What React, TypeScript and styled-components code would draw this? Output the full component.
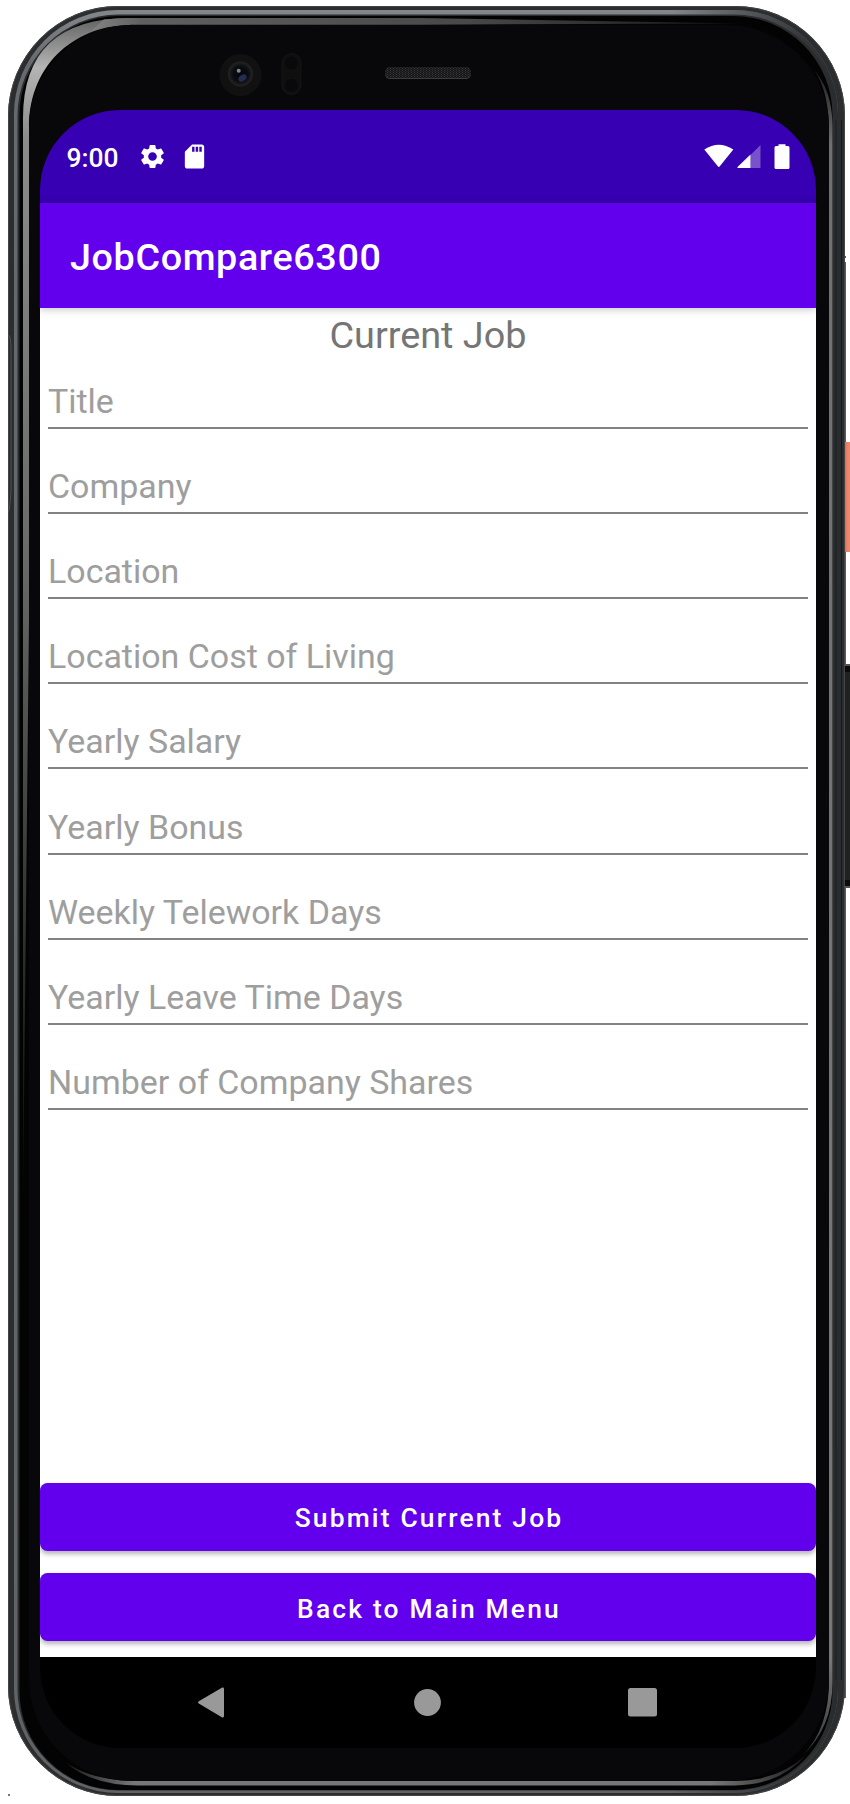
import React from "react";
import styled, { createGlobalStyle } from "styled-components";
import { MdSdCard, MdSettings } from "react-icons/md";

const PURPLE = "#6200ee";
const PURPLE_DARK = "#3700b3";

const GlobalStyle = createGlobalStyle`
  *, *::before, *::after { box-sizing: border-box; }
  body { margin: 0; background: #fff; font-family: Roboto, "Liberation Sans", sans-serif; }
`;

const Device = styled.main`
  position: relative;
  width: 850px;
  height: 1804px;
  padding: 110px 34px 56px 40px;
  overflow: hidden;
`;

const FrameArt = styled.svg`
  position: absolute;
  inset: 0;
`;

const Screen = styled.div`
  position: relative;
  width: 776px;
  height: 1638px;
  display: flex;
  flex-direction: column;
  border-radius: 80px;
  overflow: hidden;
`;

const StatusBar = styled.header`
  flex: none;
  height: 93px;
  display: flex;
  align-items: center;
  justify-content: space-between;
  padding: 0 26.5px;
  background: ${PURPLE_DARK};
  color: #fff;
`;

const StatusGroup = styled.div<{ $gap: number }>`
  display: flex;
  align-items: center;
  gap: ${({ $gap }) => $gap}px;
`;

const Clock = styled.span`
  margin-right: 6.5px;
  font-size: 26.4px;
  font-weight: 500;
  line-height: 32px;
  padding-top: 2px;
`;

const AppBar = styled.div`
  flex: none;
  position: relative;
  height: 105px;
  display: flex;
  align-items: center;
  padding: 3px 30px 0;
  background: ${PURPLE};
  box-shadow: 0 1px 8px rgba(0, 0, 0, 0.25);
`;

const AppTitle = styled.h1`
  margin: 0;
  color: #fff;
  font-size: 37.7px;
  font-weight: 500;
  line-height: 44px;
  letter-spacing: 0.63px;
`;

const Content = styled.section`
  flex: 1;
  min-height: 0;
  display: flex;
  flex-direction: column;
  background: #fff;
`;

const FormTitle = styled.h2`
  margin: 0;
  height: 36px;
  padding-top: 5px;
  color: #757575;
  font-size: 37.8px;
  font-weight: 400;
  line-height: 44px;
  text-align: center;
`;

const Fields = styled.div`
  display: flex;
  flex-direction: column;
  padding: 0 8px;
`;

const Field = styled.label`
  height: 85.1px;
  display: flex;
  flex-direction: column;
  justify-content: flex-end;
  padding: 0 0 5px;
  border-bottom: 2px solid #828282;
  color: #9e9e9e;
  font-size: 33.95px;
  line-height: 40px;
`;

const Actions = styled.div`
  margin-top: auto;
  display: flex;
  flex-direction: column;
  gap: 22.5px;
  padding-bottom: 16px;
`;

const ActionButton = styled.button`
  height: 68px;
  padding: 3px 0 0 2px;
  border: 0;
  border-radius: 7.5px;
  background: ${PURPLE};
  box-shadow: 0 3px 5px rgba(0, 0, 0, 0.3);
  color: #fff;
  font: 500 26.4px Roboto, "Liberation Sans", sans-serif;
  letter-spacing: 2.17px;
`;

const NavBar = styled.nav`
  flex: none;
  height: 91px;
  display: flex;
  align-items: center;
  justify-content: space-between;
  padding: 0 159px 0 158px;
  border-radius: 0 0 80px 80px;
  background: #000;
`;

const HomeIcon = styled.svg`
  margin-left: 2px;
`;

const fields = [
  "Title",
  "Company",
  "Location",
  "Location Cost of Living",
  "Yearly Salary",
  "Yearly Bonus",
  "Weekly Telework Days",
  "Yearly Leave Time Days",
  "Number of Company Shares",
];

function PhoneFrame() {
  return (
    <FrameArt width="850" height="1804" viewBox="0 0 850 1804" aria-hidden="true">
      <defs>
        <linearGradient id="rim" x1="0" y1="0" x2="0" y2="1">
          <stop offset="0" stopColor="#85868b" />
          <stop offset=".03" stopColor="#66696e" />
          <stop offset=".3" stopColor="#64686c" />
          <stop offset="1" stopColor="#606264" />
        </linearGradient>
        <linearGradient id="rimFade" x1="0" y1="0" x2="1" y2="0">
          <stop offset="0" stopColor="#151617" stopOpacity="0" />
          <stop offset=".8" stopColor="#151617" stopOpacity="0" />
          <stop offset="1" stopColor="#292c2e" />
        </linearGradient>
        <linearGradient id="glassLeft" x1="0" y1="20" x2="0" y2="1200" gradientUnits="userSpaceOnUse">
          <stop offset="0" stopColor="#666" />
          <stop offset=".04" stopColor="#b4b4b4" />
          <stop offset=".1" stopColor="#8b8b8b" />
          <stop offset=".45" stopColor="#6a6a6a" />
          <stop offset=".75" stopColor="#353535" />
          <stop offset="1" stopColor="#0a090b" />
        </linearGradient>
        <linearGradient id="glassTop" x1="60" y1="0" x2="740" y2="0" gradientUnits="userSpaceOnUse">
          <stop offset="0" stopColor="#999" />
          <stop offset=".12" stopColor="#606060" />
          <stop offset=".6" stopColor="#484848" />
          <stop offset="1" stopColor="#151515" />
        </linearGradient>
        <linearGradient id="glassRight" x1="0" y1="60" x2="0" y2="1760" gradientUnits="userSpaceOnUse">
          <stop offset="0" stopColor="#111" />
          <stop offset=".05" stopColor="#707070" />
          <stop offset=".94" stopColor="#777" />
          <stop offset="1" stopColor="#333" />
        </linearGradient>
        <linearGradient id="glassBottom" x1="60" y1="0" x2="800" y2="0" gradientUnits="userSpaceOnUse">
          <stop offset="0" stopColor="#111" />
          <stop offset=".1" stopColor="#777" />
          <stop offset=".88" stopColor="#777" />
          <stop offset="1" stopColor="#222" />
        </linearGradient>
        <linearGradient id="power" x1="844" y1="0" x2="850" y2="0" gradientUnits="userSpaceOnUse">
          <stop offset="0" stopColor="#d9583f" />
          <stop offset=".5" stopColor="#f08068" />
          <stop offset="1" stopColor="#ec8a72" />
        </linearGradient>
        <radialGradient id="lens">
          <stop offset="0" stopColor="#05060a" />
          <stop offset=".6" stopColor="#0b0c10" />
          <stop offset="1" stopColor="#252525" />
        </radialGradient>
        <pattern id="mesh" width="3" height="2" patternUnits="userSpaceOnUse">
          <rect width="3" height="2" fill="#151515" />
          <rect width="1" height="1" fill="#3a3a3a" />
          <rect x="1.5" y="1" width="1" height="1" fill="#303030" />
        </pattern>
      </defs>

      {/* side buttons */}
      <rect x="843" y="256" width="3" height="2" fill="#555" />
      <rect x="842" y="262" width="4" height="1436" fill="#5a5c5d" />
      <rect x="844" y="442" width="10" height="110" fill="url(#power)" />
      <rect x="844" y="664" width="10" height="224" fill="#555" />
      <rect x="844" y="666" width="10" height="220" fill="#202121" />
      <rect x="844" y="666" width="10" height="6" fill="#0b0b0b" />
      <rect x="844" y="880" width="10" height="6" fill="#0b0b0b" />

      {/* metal body */}
      <rect x="8" y="6" width="837" height="1790" rx="110" fill="#2c2d2e" />
      <rect x="8.5" y="6.5" width="836" height="1789" rx="109.5" fill="none" stroke="#454545" />
      <rect x="14" y="10" width="824" height="1783" rx="104" fill="url(#rim)" />
      <rect x="14" y="10" width="824" height="1783" rx="104" fill="url(#rimFade)" />
      <rect x="17.5" y="14.5" width="818" height="1776" rx="101" fill="#2a2c2e" />
      <rect x="19.5" y="16" width="813" height="1774" rx="99" fill="#030303" />
      <rect x="833" y="120" width="10" height="1560" fill="#2a2d2f" />
      <rect x="835.5" y="120" width="1" height="1560" fill="#1b1d1e" />
      <rect x="841" y="120" width="1" height="1560" fill="#171818" />

      {/* glass reflections */}
      <path d="M23 1200V118Q23 18 130 18V25C80 25 29 60 29 128V620Z" fill="url(#glassLeft)" />
      <path d="M104 19.5Q116 18 130 18H420L740 23.5L420 24.7H130Q108 25 91 31Z" fill="url(#glassTop)" />
      <path d="M814 70Q829 91 829 132V1681Q829 1728 803 1755Q833 1727 832.5 1681V125Q832 90 814 70Z" fill="url(#glassRight)" />
      <path d="M65 1762Q92 1785.5 138 1785.5H735Q780 1785 806 1755Q778 1781 735 1781H138Q92 1781 65 1762Z" fill="url(#glassBottom)" />
      <rect x="29" y="25" width="800" height="1756" rx="102" fill="#08080a" />
      <path d="M8.5 335Q11 336 11 350V490Q10 508 8.5 512" fill="none" stroke="#505050" />
      <rect x="8" y="1794" width="2" height="2" fill="#777" />

      {/* camera, sensors and speaker */}
      <circle cx="240.5" cy="75" r="21" fill="#111" />
      <circle cx="240.5" cy="74" r="12.5" fill="url(#lens)" />
      <ellipse cx="242.5" cy="78" rx="4.5" ry="3" fill="#222d50" transform="rotate(-35 242.5 78)" />
      <circle cx="238.7" cy="70.8" r="2" fill="#85858a" />
      <rect x="282" y="53.5" width="19" height="41" rx="9.5" fill="#0f0f0f" stroke="#151515" />
      <circle cx="291.5" cy="63" r="6.5" fill="#090909" />
      <circle cx="291.5" cy="85.5" r="6.5" fill="#090909" />
      <rect x="385" y="67.5" width="86" height="11.5" rx="5" fill="#444" />
      <rect x="385" y="67" width="86" height="11.3" rx="5" fill="url(#mesh)" />
    </FrameArt>
  );
}

function SystemStatus() {
  return (
    <svg width="86" height="26" viewBox="0 0 86 26" fill="#fff" aria-hidden="true">
      <path d="M.3 5.4Q14.8-4 29.3 5.4L15.8 22.3Q14.8 23.5 13.8 22.3Z" />
      <path d="M56.5 1V24H46.5V11Z" opacity=".32" />
      <path d="M46.5 10.5V24H33.5V23Z" />
      <path d="M74.5.3H81.5V2H84Q85.5 2 85.5 3.6V23.4Q85.5 25 84 25H72Q70.5 25 70.5 23.4V3.6Q70.5 2 72 2H74.5Z" />
    </svg>
  );
}

export default function App() {
  return (
    <>
      <GlobalStyle />
      <Device>
        <PhoneFrame />
        <Screen>
          <StatusBar>
            <StatusGroup $gap={13}>
              <Clock>9:00</Clock>
              <MdSettings size={29} />
              <MdSdCard size={29} />
            </StatusGroup>
            <SystemStatus />
          </StatusBar>
          <AppBar>
            <AppTitle>JobCompare6300</AppTitle>
          </AppBar>
          <Content>
            <FormTitle>Current Job</FormTitle>
            <Fields>
              {fields.map((name) => (
                <Field key={name}>{name}</Field>
              ))}
            </Fields>
            <Actions>
              <ActionButton>Submit Current Job</ActionButton>
              <ActionButton>Back to Main Menu</ActionButton>
            </Actions>
          </Content>
          <NavBar>
            <svg width="27" height="31" viewBox="0 0 27 31" fill="#999" aria-label="Back">
              <path d="M.8 14.2L23.8.8Q26 0 26 2V29Q26 31 23.8 30.2L.8 16.6Q-.6 15.4.8 14.2Z" />
            </svg>
            <HomeIcon width="27" height="27" viewBox="0 0 27 27" fill="#999" aria-label="Home">
              <circle cx="13.5" cy="13.5" r="13.4" />
            </HomeIcon>
            <svg width="29" height="29" viewBox="0 0 29 29" fill="#999" aria-label="Recents">
              <rect width="29" height="28.5" rx="2.5" />
            </svg>
          </NavBar>
        </Screen>
      </Device>
    </>
  );
}
